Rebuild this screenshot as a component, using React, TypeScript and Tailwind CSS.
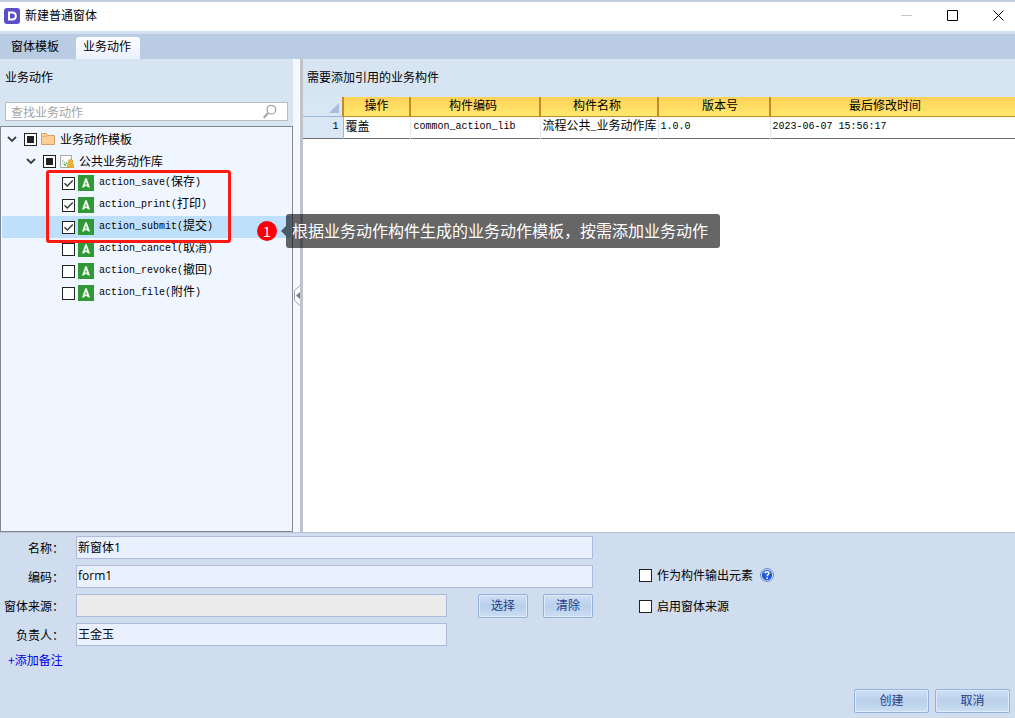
import { useState } from 'react'
import clsx from 'clsx'

const actions = [
  { code: 'action_save', name: '保存', checked: true },
  { code: 'action_print', name: '打印', checked: true },
  { code: 'action_submit', name: '提交', checked: true },
  { code: 'action_cancel', name: '取消', checked: false },
  { code: 'action_revoke', name: '撤回', checked: false },
  { code: 'action_file', name: '附件', checked: false },
]

const columns = [
  { title: '操作', pad: '' },
  { title: '构件编码', pad: 'pr-1' },
  { title: '构件名称', pad: 'pr-1' },
  { title: '版本号', pad: 'pl-3' },
  { title: '最后修改时间', pad: 'pr-4' },
]

const mono = "font-['Liberation_Mono','Noto_Sans_CJK_SC',monospace] text-[10px]"

function Checkbox({ id, label, checked, mixed }: { id: string; label: string; checked?: boolean; mixed?: boolean }) {
  return (
    <span className="relative flex h-[13px] w-[13px] shrink-0">
      <input
        id={id}
        type="checkbox"
        aria-label={label}
        defaultChecked={checked}
        className="peer h-[13px] w-[13px] appearance-none border border-[#222] bg-white"
      />
      {mixed ? (
        <span className="pointer-events-none absolute inset-[3px] bg-[#222]" />
      ) : (
        <svg viewBox="0 0 13 13" className="pointer-events-none absolute inset-0 hidden peer-checked:block" fill="none" stroke="#333" strokeWidth="1.3">
          <path d="M2.5 6.2l2.8 2.8L10.8 3.5" />
        </svg>
      )}
    </span>
  )
}

function Chevron() {
  return (
    <svg viewBox="0 0 10 10" className="h-[10px] w-[10px] shrink-0" fill="none" stroke="#404040" strokeWidth="1.8">
      <path d="M1 3l4 4 4-4" />
    </svg>
  )
}

function FolderIcon() {
  return (
    <svg viewBox="0 0 14 12" className="h-[12px] w-[14px] shrink-0">
      <path d="M.5 11.5V.5h5l1 2h7v9z" fill="#fdcf95" stroke="#d9a05f" />
      <path d="M1 3.5h5l.8-1" stroke="#e3ae70" strokeWidth=".7" fill="none" />
    </svg>
  )
}

function LibraryIcon() {
  return (
    <svg viewBox="0 0 14 13" className="h-[13px] w-[14px] shrink-0">
      <path d="M.5 12.5V.5h11V12.5z" fill="#fbfcfa" stroke="#a4a8a8" />
      <path d="M2 6h1.4M4 7.6h1.2M2.4 8.6h1" stroke="#8a8f8f" strokeWidth="1" />
      <path d="M4 9h2v1.6H4zM6 7.4h1.4V9H6z" fill="#35bb45" />
      <path d="M7.2 12.8v-2.2q0-1.6 2-2-.9-.7-.9-2 0-2.2 2.3-2.2t2.3 2.2q0 1.3-.9 2 2 .4 2 2v2.2z" fill="#f0b42e" stroke="#cc901f" strokeWidth=".6" />
    </svg>
  )
}

function ActionIcon() {
  return (
    <svg viewBox="0 0 16 16" className="h-4 w-4 shrink-0">
      <rect width="16" height="16" fill="#2f9a35" />
      <path d="M7.3 3.2h1.4L12 12.5h-1.6L8 10.8l-2.4 1.7H4z" fill="#f2faf2" />
      <path d="M8 6.6l1 3.2-1-.6-1 .6z" fill="#2f9a35" />
    </svg>
  )
}

function HelpIcon() {
  return (
    <svg viewBox="0 0 14 14" className="h-[14px] w-[14px]">
      <circle cx="7" cy="7" r="6.5" fill="#d5e2f8" stroke="#6b8fc9" />
      <circle cx="7" cy="7" r="5.2" fill="#1c58d8" />
      <path d="M2.6 5.5a4.7 4.7 0 0 1 8.8 0Q7 3.8 2.6 5.5z" fill="#5485e6" />
      <path d="M5 5.4Q5.2 3.7 7 3.7t1.9 1.5C8.9 6.6 7.1 6.6 7.1 8.2" stroke="#fff" strokeWidth="1.5" fill="none" />
      <circle cx="7.1" cy="10.2" r=".9" fill="#fff" />
    </svg>
  )
}

function Button({ children, className }: { children: string; className: string }) {
  return (
    <button
      type="button"
      className={clsx(
        'h-[24px] rounded-[2px] border border-[#92b1dc] bg-linear-to-b from-[#cfe0f5] from-0% via-[#b9cfea] via-50% to-[#cbdef3] pb-[2px] text-[#1d4189] shadow-[inset_0_0_0_1px_#deebfa]',
        className,
      )}
    >
      {children}
    </button>
  )
}

function Field({ id, label, value, disabled, short }: { id: string; label: string; value: string; disabled?: boolean; short?: boolean }) {
  return (
    <>
      <label htmlFor={id} className="w-[76px] shrink-0 pr-3 text-right whitespace-nowrap">{label}：</label>
      <input
        id={id}
        defaultValue={value}
        disabled={disabled}
        className={clsx(
          "h-[23px] border border-[#aeb9dc] px-px pb-[2px] font-['Open_Sans','Noto_Sans_CJK_SC',sans-serif] text-black",
          short ? 'w-[371px]' : 'w-[517px]',
          disabled ? 'bg-[#ececec]' : 'bg-[#e9f1ff]',
        )}
      />
    </>
  )
}

function ActionTree() {
  return (
    <div className="relative flex-1 border border-[#828790] bg-[#eff6ff] p-px">
      <div className="flex h-[22px] items-center pl-[5px]">
        <Chevron />
        <span className="ml-[7px] mr-1"><Checkbox id="root" label="业务动作模板" mixed /></span>
        <FolderIcon />
        <label htmlFor="root" className="ml-[5px]">业务动作模板</label>
      </div>
      <div className="flex h-[22px] items-center pl-[24px]">
        <Chevron />
        <span className="ml-[7px] mr-1"><Checkbox id="lib" label="公共业务动作库" mixed /></span>
        <LibraryIcon />
        <label htmlFor="lib" className="ml-[5px]">公共业务动作库</label>
      </div>
      {actions.map((a) => (
        <div key={a.code} className={clsx('flex h-[22px] items-center pl-[60px]', a.code === 'action_submit' && 'bg-[#bfe0fd]')}>
          <Checkbox id={a.code} label={a.name} checked={a.checked} />
          <span className="ml-[3px] mr-[5px]"><ActionIcon /></span>
          <label htmlFor={a.code} className={clsx('flex items-center', mono)}>
            {a.code}(<span className="text-xs">{a.name}</span>)
          </label>
        </div>
      ))}
      <div className="pointer-events-none absolute top-[43px] left-[45px] h-[73px] w-[185px] rounded-[3px] border-3 border-[#fc1a12]" />
    </div>
  )
}

function ReferenceTable() {
  return (
    <table className="w-full table-fixed border-collapse bg-white text-left">
      <colgroup>
        <col className="w-[40px]" />
        <col className="w-[67px]" />
        <col className="w-[130px]" />
        <col className="w-[118px]" />
        <col className="w-[112px]" />
        <col />
      </colgroup>
      <thead>
        <tr className="h-[19px]">
          <th aria-label="行号" className="border-r border-b border-[#9db6dc] bg-[#d9e6f4] p-0">
            <svg viewBox="0 0 10 10" className="mt-[3px] mr-[3px] ml-auto h-[10px] w-[10px]">
              <path d="M10 0v10H0z" fill="#a9bcdc" />
            </svg>
          </th>
          {columns.map((c) => (
            <th
              key={c.title}
              className={clsx(
                'border-b border-l-2 border-[#c48a2a] bg-linear-to-b from-[#ffd158] to-[#ffe96e] p-0 pb-[2px] text-center leading-4 font-normal',
                c.pad,
              )}
            >
              {c.title}
            </th>
          ))}
        </tr>
      </thead>
      <tbody>
        <tr className="h-[20px] border-b border-[#707070] whitespace-nowrap">
          <th className={clsx('border-r border-[#9db6dc] bg-[#d9e6f4] p-0 pr-1 text-right font-normal', mono)}>1</th>
          <td className="border-r border-[#e8e8e8] p-0 pb-[2px] pl-[2px] leading-4">覆盖</td>
          <td className={clsx('border-r border-[#e8e8e8] p-0 pl-[3px]', mono)}>common_action_lib</td>
          <td className="border-r border-[#e8e8e8] p-0 pb-[2px] pl-[2px] leading-4">
            流程公共<span className={mono}>_</span>业务动作库
          </td>
          <td className={clsx('border-r border-[#e8e8e8] p-0 pl-[2px]', mono)}>1.0.0</td>
          <td className={clsx('p-0 pl-[2px]', mono)}>2023-06-07 15:56:17</td>
        </tr>
      </tbody>
    </table>
  )
}

export default function App() {
  const [tab, setTab] = useState('业务动作')

  return (
    <div className="flex min-h-screen flex-col border-t-2 border-[#c5cfe2] bg-[#d0ddee] font-['Noto_Sans_CJK_SC',sans-serif] text-xs text-black">
      <header className="flex h-[29px] items-center bg-white pb-[2px] pl-1">
        <svg viewBox="0 0 16 16" className="h-4 w-4">
          <rect width="16" height="16" rx="3" fill="#5d4dc6" />
          <path d="M5 4.5h3.2Q11.8 4.6 11.8 8t-3.6 3.5H5z" fill="none" stroke="#fff" strokeWidth="2" />
        </svg>
        <h1 className="ml-[5px] flex-1 pb-px">新建普通窗体</h1>
        <div className="flex h-full gap-3">
          <button type="button" aria-label="最小化" className="flex w-[34px] items-center justify-center">
            <svg viewBox="0 0 11 11" className="h-[11px] w-[11px]"><path d="M0 5.5h11" stroke="#c6c6c6" /></svg>
          </button>
          <button type="button" aria-label="最大化" className="flex w-[34px] items-center justify-center">
            <svg viewBox="0 0 11 11" className="h-[11px] w-[11px]"><path d="M.5.5h10v10H.5z" fill="none" stroke="#000" /></svg>
          </button>
          <button type="button" aria-label="关闭" className="flex w-[34px] items-center justify-center">
            <svg viewBox="0 0 11 11" className="h-[11px] w-[11px]"><path d="M.5.5l10 10M10.5.5l-10 10" stroke="#000" /></svg>
          </button>
        </div>
      </header>

      <nav className="flex h-[28px] items-end border-t-3 border-[#d1dff0] bg-[#bacce4] pl-1">
        {['窗体模板', '业务动作'].map((t) => (
          <button
            key={t}
            type="button"
            onClick={() => setTab(t)}
            className={clsx('mr-2 h-[22px] w-16 rounded-t-[3px] pr-[2px] pb-1 whitespace-nowrap', tab === t && 'bg-linear-to-b from-[#fbfdff] to-[#eaf2fd]')}
          >
            {t}
          </button>
        ))}
      </nav>

      <main className="relative flex flex-1">
        <section className="flex w-[293px] shrink-0 flex-col bg-[#d7e4f2]">
          <h2 className="px-[5px] pt-[9px] leading-[18px]">业务动作</h2>
          <div className="relative mx-[5px] mt-4 mb-[5px]">
            <input
              type="search"
              aria-label="查找业务动作"
              placeholder="查找业务动作"
              className="block h-[19px] w-full border border-[#b9bcc4] bg-white pr-7 pb-px pl-[5px] placeholder:text-[#a3a3a3]"
            />
            <svg viewBox="0 0 16 16" className="absolute top-[2px] right-[11px] h-[15px] w-[15px]" fill="none" stroke="#a6a6a6">
              <circle cx="10" cy="6" r="4.6" strokeWidth="1.4" />
              <path d="M6.6 9.6L1.8 14.6" strokeWidth="2.2" />
            </svg>
          </div>
          <ActionTree />
        </section>

        <div className="relative w-[10px] shrink-0 border-r-3 border-[#c0c3ca] bg-[#f6f8ff]">
          <button type="button" aria-label="收起" className="absolute top-[226px] left-px h-[21px] w-[6px]">
            <svg viewBox="0 0 6 21" className="h-[21px] w-[6px]">
              <path d="M6 .5L.5 5.5v10L6 20.5" fill="#fff" stroke="#9a9cb0" />
              <path d="M6 7v7L2 10.5z" fill="#777a8c" />
            </svg>
          </button>
        </div>

        <section className="flex min-w-0 flex-1 flex-col bg-white">
          <h2 className="h-[38px] bg-[#d7e4f2] pt-[9px] pl-1 leading-[18px]">需要添加引用的业务构件</h2>
          <ReferenceTable />
        </section>

        {/* callout over the tree and the table */}
        <div className="absolute top-[155px] left-[257px] z-10 flex h-[34px] items-center">
          <span className="flex h-5 w-5 items-center justify-center rounded-full bg-[#fb0007] pb-px text-sm leading-none text-white">1</span>
          <svg viewBox="0 0 5 10" className="ml-1 h-[10px] w-[5px]"><path d="M5 0v10L0 5z" fill="#000" fillOpacity=".6" /></svg>
          <p className="flex h-full items-center rounded-[3px] bg-black/60 pr-3 pb-[2px] pl-[6px] text-base whitespace-nowrap text-white">
            根据业务动作构件生成的业务动作模板，按需添加业务动作
          </p>
        </div>
      </main>

      <form className="flex flex-col border-t border-[#b4c3d8] pt-[3px]">
        <div className="flex">
          <div className="flex w-[593px] shrink-0 flex-col gap-[6px]">
            <div className="flex h-[23px] items-center"><Field id="name" label="名称" value="新窗体1" /></div>
            <div className="flex h-[23px] items-center"><Field id="code" label="编码" value="form1" /></div>
            <div className="flex h-[23px] items-center">
              <Field id="source" label="窗体来源" value="" disabled short />
              <div className="ml-auto flex gap-[15px]">
                <Button className="w-[50px]">选择</Button>
                <Button className="w-[50px]">清除</Button>
              </div>
            </div>
            <div className="flex h-[23px] items-center"><Field id="owner" label="负责人" value="王金玉" short /></div>
          </div>
          <div className="ml-[46px] flex flex-col gap-[13px] pt-[30px]">
            <div className="flex h-[18px] items-center gap-[5px]">
              <Checkbox id="output" label="作为构件输出元素" />
              <label htmlFor="output">作为构件输出元素</label>
              <button type="button" aria-label="帮助" className="ml-[2px]"><HelpIcon /></button>
            </div>
            <div className="flex h-[18px] items-center gap-[5px]">
              <Checkbox id="enable" label="启用窗体来源" />
              <label htmlFor="enable">启用窗体来源</label>
            </div>
          </div>
        </div>
        <a href="#remark" className="mt-[5px] ml-2 self-start leading-[18px] text-[#0000f0]">+添加备注</a>
        <div className="mt-5 flex justify-end gap-[6px] pr-[5px] pb-[5px]">
          <Button className="w-[75px]">创建</Button>
          <Button className="w-[75px]">取消</Button>
        </div>
      </form>
    </div>
  )
}
